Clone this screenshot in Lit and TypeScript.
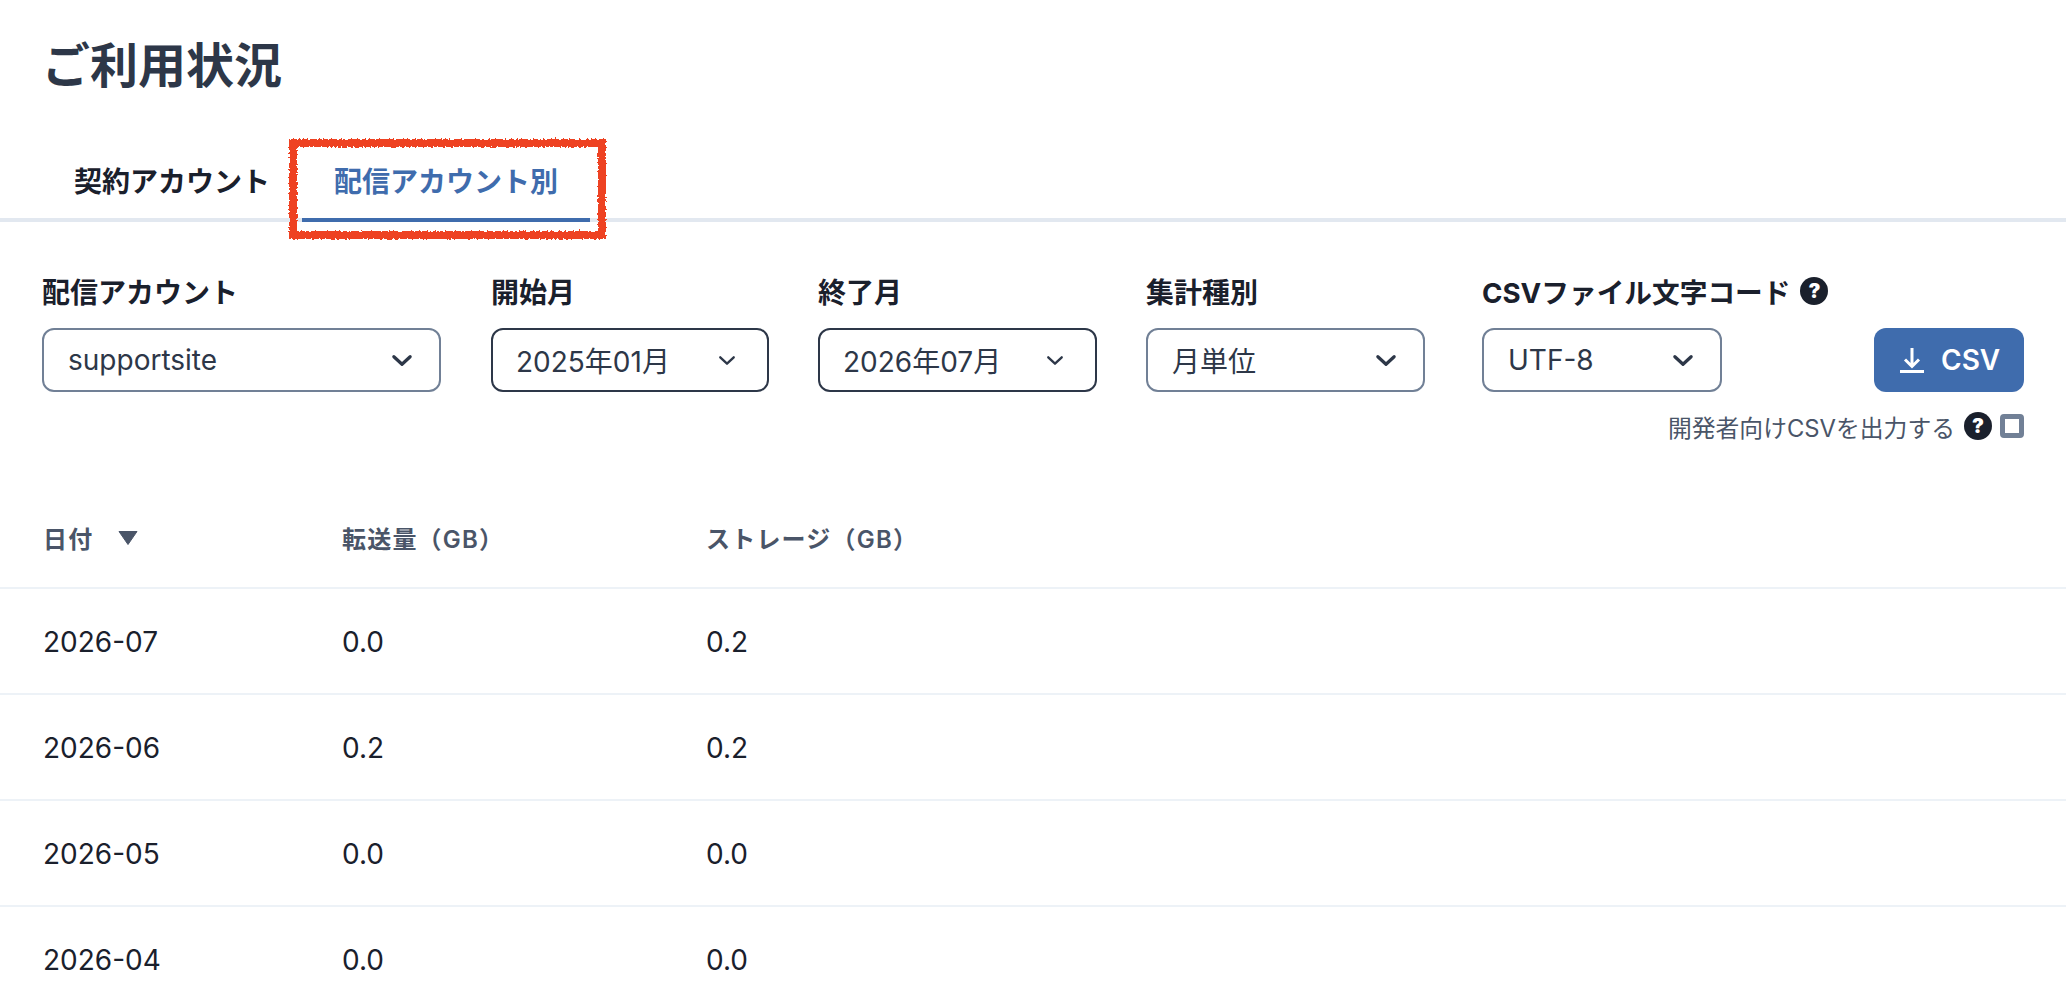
import { LitElement, html, css } from "lit";
import { customElement } from "lit/decorators.js";

const chevron = (small = false) => html`<svg class="chev ${small ? "small" : ""}" viewBox="0 0 20 12" fill="none" stroke="#2d3748" stroke-width="${small ? 2.6 : 3}" stroke-linecap="round" stroke-linejoin="round"><path d="M2.5 2.5 L10 9.5 L17.5 2.5"/></svg>`;

const help = () => html`<span class="help">?</span>`;

const rows = [
  ["2026-07", "0.0", "0.2"],
  ["2026-06", "0.2", "0.2"],
  ["2026-05", "0.0", "0.0"],
  ["2026-04", "0.0", "0.0"],
];

@customElement("app-root")
export class AppRoot extends LitElement {
  static styles = css`
    :host {
      display: block;
      position: relative;
      height: 1006px;
      overflow: hidden;
      background: #fff;
      color: #1a202c;
      font-family: Inter, "Noto Sans CJK JP", sans-serif;
    }
    h1 {
      margin: 0;
      padding: 36px 42px 0;
      font-size: 48px;
      line-height: 60px;
      font-weight: 700;
      color: #2d3748;
    }
    .tabs {
      display: flex;
      margin-top: 46px;
      padding: 0 42px;
      border-bottom: 4px solid #e2e8f0;
    }
    .tab {
      height: 76px;
      margin-bottom: -4px;
      padding: 0 32px;
      display: flex;
      align-items: center;
      font-size: 28px;
      font-weight: 700;
      border-bottom: 4px solid transparent;
    }
    .tab.active {
      color: #3f6cad;
      border-bottom-color: #3f6cad;
    }
    .filters {
      display: flex;
      align-items: flex-end;
      padding: 51px 42px 0;
    }
    .group {
      display: flex;
      flex-direction: column;
      gap: 19px;
    }
    .label {
      display: flex;
      align-items: center;
      gap: 10px;
      height: 36px;
      font-size: 28px;
      font-weight: 700;
      white-space: nowrap;
    }
    .encoding .label {
      font-size: 27.7px;
    }
    .select {
      height: 64px;
      box-sizing: border-box;
      display: flex;
      align-items: center;
      justify-content: space-between;
      border: 2px solid #718096;
      border-radius: 12px;
      padding: 0 26px 0 24px;
      font-size: 28px;
      color: #2d3748;
    }
    .select.dark {
      border-color: #2d3748;
      padding-left: 23px;
      padding-right: 31px;
    }
    .chev {
      width: 22px;
      height: 13px;
    }
    .chev.small {
      width: 18px;
      height: 11px;
    }
    .account { width: 399px; margin-right: 50px; }
    .start { width: 278px; margin-right: 49px; }
    .end { width: 279px; margin-right: 49px; }
    .kind { width: 279px; margin-right: 57px; }
    .encoding { width: 240px; }
    .button {
      margin-left: auto;
      width: 150px;
      height: 64px;
      box-sizing: border-box;
      padding-left: 26px;
      display: flex;
      align-items: center;
      gap: 17px;
      background: #3f6cad;
      border-radius: 12px;
      color: #fff;
      font-size: 28px;
      font-weight: 600;
    }
    .dl {
      width: 24px;
      height: 25px;
    }
    .dev {
      display: flex;
      justify-content: flex-end;
      align-items: center;
      height: 28px;
      margin-top: 20px;
      padding: 0 42px;
      font-size: 23.8px;
      color: #4a5568;
    }
    .dev .help {
      margin-left: 9px;
      margin-right: 8px;
    }
    .help {
      display: inline-flex;
      align-items: center;
      justify-content: center;
      width: 28px;
      height: 28px;
      flex: none;
      border-radius: 50%;
      background: #1a202c;
      color: #fff;
      font-size: 20px;
      font-weight: 900;
      line-height: 1;
    }
    .check {
      width: 24px;
      height: 24px;
      box-sizing: border-box;
      border: 5px solid #718096;
      border-radius: 4px;
    }
    .table {
      margin-top: 51px;
    }
    .row {
      display: grid;
      grid-template-columns: 299px 364px 1fr;
      align-items: center;
      padding: 2px 0 0 43px;
      height: 106px;
      box-sizing: border-box;
      border-bottom: 2px solid #edf2f7;
      font-size: 28px;
    }
    .row.head {
      height: 98px;
      padding: 0 0 3px 43px;
      font-size: 24px;
      font-weight: 600;
      letter-spacing: 1.2px;
      color: #4a5568;
    }
    .sort {
      display: flex;
      align-items: center;
      gap: 25px;
    }
    .tri {
      width: 20px;
      height: 14px;
    }
    .mark {
      position: absolute;
      left: 285px;
      top: 135px;
      width: 325px;
      height: 108px;
      pointer-events: none;
    }
  `;

  render() {
    return html`
      <h1>ご利用状況</h1>
      <div class="tabs">
        <div class="tab">契約アカウント</div>
        <div class="tab active">配信アカウント別</div>
      </div>
      <div class="filters">
        <div class="group account">
          <div class="label">配信アカウント</div>
          <div class="select"><span>supportsite</span>${chevron()}</div>
        </div>
        <div class="group start">
          <div class="label">開始月</div>
          <div class="select dark"><span>2025年01月</span>${chevron(true)}</div>
        </div>
        <div class="group end">
          <div class="label">終了月</div>
          <div class="select dark"><span>2026年07月</span>${chevron(true)}</div>
        </div>
        <div class="group kind">
          <div class="label">集計種別</div>
          <div class="select"><span>月単位</span>${chevron()}</div>
        </div>
        <div class="group encoding">
          <div class="label">CSVファイル文字コード ${help()}</div>
          <div class="select"><span>UTF-8</span>${chevron()}</div>
        </div>
        <div class="button">
          <svg class="dl" viewBox="0 0 24 25" fill="none" stroke="#fff" stroke-width="3"><path d="M12 0 V18 M5 11.5 L12 18.5 L19 11.5"/><path d="M0 23.5 H24"/></svg>
          <span>CSV</span>
        </div>
      </div>
      <div class="dev">
        <span>開発者向けCSVを出力する</span>${help()}<span class="check"></span>
      </div>
      <div class="table">
        <div class="row head">
          <div class="sort"><span>日付</span><svg class="tri" viewBox="0 0 20 14"><path d="M1 .5 H19 L10 13.5 Z" fill="#4a5568" stroke="#4a5568" stroke-width="1" stroke-linejoin="round"/></svg></div>
          <div>転送量（GB）</div>
          <div>ストレージ（GB）</div>
        </div>
        ${rows.map((r) => html`<div class="row">${r.map((c) => html`<div>${c}</div>`)}</div>`)}
      </div>
      <svg class="mark" viewBox="0 0 325 108">
        <defs>
          <filter id="rough" x="-5%" y="-10%" width="110%" height="120%">
            <feTurbulence type="fractalNoise" baseFrequency="0.5" numOctaves="2" seed="4"/>
            <feDisplacementMap in="SourceGraphic" scale="5"/>
          </filter>
        </defs>
        <rect x="8" y="8" width="309" height="92" fill="none" stroke="#ee4224" stroke-width="8" filter="url(#rough)"/>
      </svg>
    `;
  }
}
